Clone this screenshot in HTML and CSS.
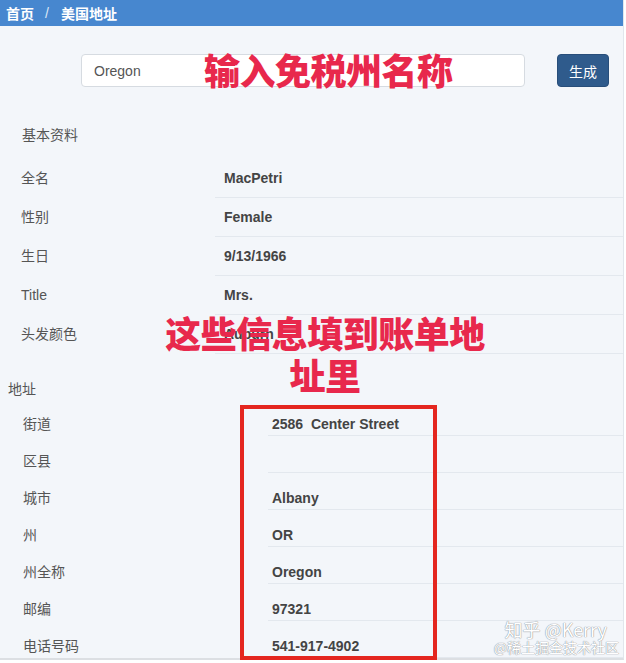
FILE: index.html
```html
<!DOCTYPE html>
<html lang="zh-CN">
<head>
    <meta charset="UTF-8">
    <meta name="viewport" content="width=device-width, initial-scale=1.0">
    <title>美国地址</title>
    <link rel="stylesheet" href="styles.css">
</head>
<body>
    <div class="page">
        <nav class="topbar">
            <span>首页</span>
            <span class="crumb-sep">/</span>
            <span>美国地址</span>
        </nav>

        <div class="search">
            <input type="text" class="state-input" value="Oregon">
            <button class="btn-generate">生成</button>
        </div>

        <section class="info basic">
            <h3 class="section-title">基本资料</h3>
            <div class="row"><div class="label">全名</div><div class="value">MacPetri</div></div>
            <div class="row"><div class="label">性别</div><div class="value">Female</div></div>
            <div class="row"><div class="label">生日</div><div class="value">9/13/1966</div></div>
            <div class="row"><div class="label">Title</div><div class="value">Mrs.</div></div>
            <div class="row"><div class="label">头发颜色</div><div class="value">Auburn</div></div>
        </section>

        <section class="info address">
            <h3 class="section-title">地址</h3>
            <div class="row"><div class="label">街道</div><div class="value">2586&nbsp; Center Street</div></div>
            <div class="row"><div class="label">区县</div><div class="value"></div></div>
            <div class="row"><div class="label">城市</div><div class="value">Albany</div></div>
            <div class="row"><div class="label">州</div><div class="value">OR</div></div>
            <div class="row"><div class="label">州全称</div><div class="value">Oregon</div></div>
            <div class="row"><div class="label">邮编</div><div class="value">97321</div></div>
            <div class="row"><div class="label">电话号码</div><div class="value">541-917-4902</div></div>
        </section>

        <!-- annotations drawn on top of the screenshot -->
        <div class="note note-input">输入免税州名称</div>
        <div class="note note-billing">这些信息填到账单地<br>址里</div>
        <div class="mark-box"></div>

        <div class="watermark">
            <div class="wm-main">知乎 @Kerry</div>
            <div class="wm-sub">@稀土掘金技术社区</div>
        </div>
    </div>
</body>
</html>
```

FILE: styles.css
```css
body {
    margin: 0;
    background-color: #fff;
    font-family: "Liberation Sans", "Noto Sans CJK SC", sans-serif;
    font-size: 14px;
    color: #555;
}
.page {
    position: relative;
    width: 623px;
    background-color: #f3f6fa;
    border-right: 1px solid #e1e6ec;
    border-bottom: 2px solid #dcdfe3;
}
.topbar {
    display: flex;
    align-items: center;
    height: 26px;
    padding-left: 6px;
    background-color: #4787cf;
    color: #fff;
    font-weight: bold;
    font-size: 14px;
}
.crumb-sep {
    margin: 0 12px 0 11px;
    font-weight: normal;
    color: #dce8f6;
}
.search {
    display: flex;
    align-items: center;
    gap: 32px;
    padding: 28px 0 0 81px;
}
.state-input {
    box-sizing: border-box;
    width: 444px;
    height: 33px;
    padding: 0 12px;
    border: 1px solid #d6dbe1;
    border-radius: 4px;
    background-color: #fff;
    font-family: inherit;
    font-size: 14px;
    color: #555;
}
.btn-generate {
    width: 52px;
    height: 33px;
    border: 1px solid #284e7a;
    border-radius: 4px;
    background-color: #2f5b8c;
    color: #fff;
    font-family: inherit;
    font-size: 14px;
    padding: 0;
}
.section-title {
    margin: 0;
    font-size: 14px;
    font-weight: normal;
    line-height: 16px;
    color: #555;
}
.row {
    display: flex;
}
.label {
    flex: none;
}
.value {
    flex: 1;
    border-bottom: 1px solid #e3e8ee;
    font-weight: bold;
    color: #444;
}

.basic {
    padding-top: 40px;
}
.basic .section-title {
    padding-left: 22px;
    margin-bottom: 16px;
}
.basic .label {
    width: 194px;
    padding-left: 21px;
    line-height: 38px;
}
.basic .value {
    padding-left: 9px;
    line-height: 38px;
}

.address {
    padding-top: 27px;
}
.address .section-title {
    padding-left: 8px;
    margin-bottom: 2px;
}
.address .label {
    width: 245px;
    padding: 15px 0 1px 23px;
    line-height: 20px;
}
.address .value {
    padding: 15px 0 1px 4px;
    line-height: 20px;
    min-height: 20px;
}

.note {
    position: absolute;
    color: #e8284c;
    font-family: "Noto Sans CJK SC", sans-serif;
    font-weight: 900;
    font-size: 36px;
    line-height: 42px;
    letter-spacing: -0.5px;
}
.note-input {
    left: 204px;
    top: 48px;
}
.note-billing {
    left: 161px;
    top: 311px;
    width: 328px;
    text-align: center;
}
.mark-box {
    position: absolute;
    left: 240px;
    top: 405px;
    width: 197px;
    height: 255px;
    box-sizing: border-box;
    border: 4px solid #e4261f;
}
.watermark {
    position: absolute;
    right: 4px;
    bottom: 2px;
    text-align: right;
    color: #fff;
    font-family: "Noto Sans CJK SC", sans-serif;
    text-shadow: 0 0 1px #8a8f96, 0 0 1px #8a8f96;
}
.wm-main {
    font-size: 18px;
    line-height: 20px;
    padding-right: 12px;
}
.wm-sub {
    font-size: 14px;
    line-height: 17px;
}
```
